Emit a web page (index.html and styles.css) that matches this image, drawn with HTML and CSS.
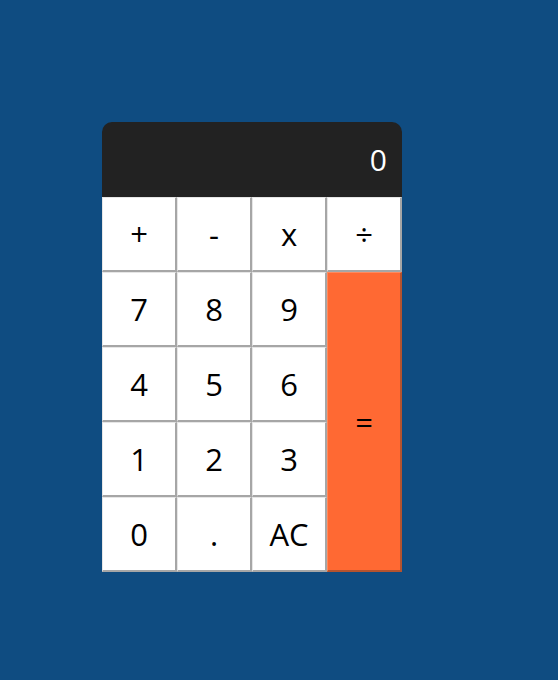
FILE: index.html
```html
<!DOCTYPE html>
<html>
<head>
<meta charset="utf-8">
<link rel="stylesheet" href="styles.css">
</head>
<body>
<div class="calculator">
  <div class="display">0</div>
  <div class="keys">
    <button class="key">+</button>
    <button class="key">-</button>
    <button class="key">x</button>
    <button class="key">÷</button>
    <button class="key">7</button>
    <button class="key">8</button>
    <button class="key">9</button>
    <button class="key equals">=</button>
    <button class="key">4</button>
    <button class="key">5</button>
    <button class="key">6</button>
    <button class="key">1</button>
    <button class="key">2</button>
    <button class="key">3</button>
    <button class="key">0</button>
    <button class="key">.</button>
    <button class="key">AC</button>
  </div>
</div>
</body>
</html>
```
FILE: styles.css
```css
html, body {
  margin: 0;
  padding: 0;
}
body {
  background: #0f4c81;
  width: 558px;
  height: 680px;
  font-family: "Open Sans", "Noto Sans", sans-serif;
}
.calculator {
  margin: 122px 0 0 102px;
  width: 300px;
}
.display {
  height: 75px;
  background: #222222;
  color: #ffffff;
  border-radius: 10px 10px 0 0;
  display: flex;
  align-items: center;
  justify-content: flex-end;
  padding: 0 15px;
  font-size: 30px;
  box-sizing: border-box;
}
.keys {
  display: grid;
  grid-template-columns: repeat(4, 75px);
  grid-template-rows: repeat(5, 75px);
}
.key {
  margin: 0;
  padding: 0;
  background: #ffffff;
  color: #000000;
  font-family: inherit;
  font-size: 31px;
  border-style: solid;
  border-width: 1px 2px 2px 1px;
  border-color: #e6e6e6 #a6a6a6 #a6a6a6 #e6e6e6;
  box-sizing: border-box;
}
.equals {
  grid-column: 4;
  grid-row: 2 / span 4;
  background: #ff6933;
  border-color: #ff8a5e #b5532e #b5532e #ff8a5e;
}
```
